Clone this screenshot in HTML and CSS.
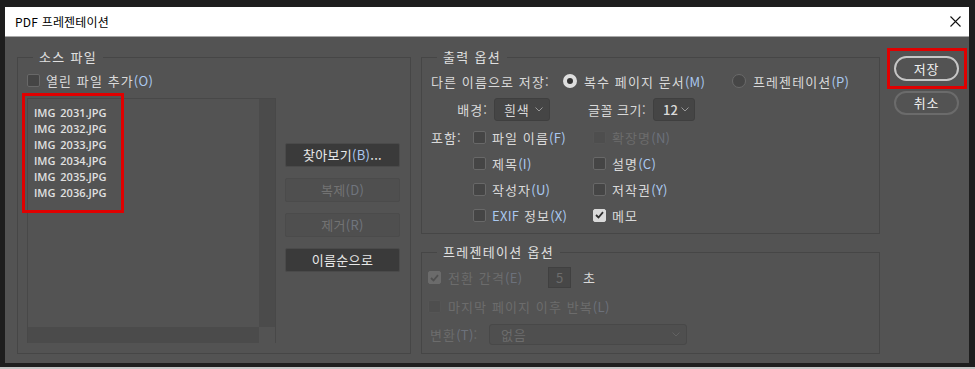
FILE: index.html
```html
<!DOCTYPE html>
<html lang="ko">
<head>
    <meta charset="UTF-8">
    <title>PDF 프레젠테이션</title>
    <link rel="stylesheet" href="styles.css">
</head>
<body>
    <div class="frame">
        <div class="titlebar">
            <span class="title">PDF 프레젠테이션</span>
            <svg class="close" width="11" height="11" viewBox="0 0 11 11"><path d="M0.5 0.5L10.5 10.5M10.5 0.5L0.5 10.5" stroke="#111" stroke-width="1.1" fill="none"/></svg>
        </div>

        <div class="dialog">
            <!-- source files -->
            <div class="group source">
                <span class="group-title">소스 파일</span>
                <div class="row-open">
                    <span class="cb"></span>
                    <span>열린 파일 추가<span class="key">(O)</span></span>
                </div>
                <div class="src-body">
                    <div class="filelist">
                        <div class="files">
                            <div>IMG 2031.JPG</div>
                            <div>IMG 2032.JPG</div>
                            <div>IMG 2033.JPG</div>
                            <div>IMG 2034.JPG</div>
                            <div>IMG 2035.JPG</div>
                            <div>IMG 2036.JPG</div>
                        </div>
                        <div class="vscroll"></div>
                        <div class="hscroll"></div>
                        <div class="corner"></div>
                        <div class="mark mark-files"></div>
                    </div>
                    <div class="src-buttons">
                        <div class="btn">찾아보기<span class="key">(B)</span>...</div>
                        <div class="btn disabled">복제<span class="key">(D)</span></div>
                        <div class="btn disabled">제거<span class="key">(R)</span></div>
                        <div class="btn">이름순으로</div>
                    </div>
                </div>
            </div>

            <div class="col">
                <!-- output options -->
                <div class="group output">
                    <span class="group-title">출력 옵션</span>
                    <div class="row">
                        <span class="lbl-saveas">다른 이름으로 저장:</span>
                        <span class="opt-radio"><span class="radio on"></span>복수 페이지 문서<span class="key">(M)</span></span>
                        <span class="opt-radio"><span class="radio"></span>프레젠테이션<span class="key">(P)</span></span>
                    </div>
                    <div class="row row-sel">
                        <span class="lbl-bg">배경:</span>
                        <span class="select sel-bg">흰색<svg width="8" height="5" viewBox="0 0 8 5"><path d="M0.5 0.5L4 4L7.5 0.5" stroke="#9a9a9a" fill="none"/></svg></span>
                        <span class="lbl-size">글꼴 크기:</span>
                        <span class="select sel-size">12<svg width="8" height="5" viewBox="0 0 8 5"><path d="M0.5 0.5L4 4L7.5 0.5" stroke="#9a9a9a" fill="none"/></svg></span>
                    </div>
                    <div class="row row-chk">
                        <span class="lbl-inc">포함:</span>
                        <span class="opt-chk"><span class="cb"></span>파일 이름<span class="key">(F)</span></span>
                        <span class="opt-chk dim"><span class="cb off"></span>확장명<span class="key">(N)</span></span>
                    </div>
                    <div class="row row-chk">
                        <span class="lbl-inc"></span>
                        <span class="opt-chk"><span class="cb"></span>제목<span class="key">(I)</span></span>
                        <span class="opt-chk"><span class="cb"></span>설명<span class="key">(C)</span></span>
                    </div>
                    <div class="row row-chk">
                        <span class="lbl-inc"></span>
                        <span class="opt-chk"><span class="cb"></span>작성자<span class="key">(U)</span></span>
                        <span class="opt-chk"><span class="cb"></span>저작권<span class="key">(Y)</span></span>
                    </div>
                    <div class="row row-chk">
                        <span class="lbl-inc"></span>
                        <span class="opt-chk"><span class="cb"></span><span class="key">EXIF</span>&nbsp;정보<span class="key">(X)</span></span>
                        <span class="opt-chk"><span class="cb on"><svg width="9" height="8" viewBox="0 0 9 8"><path d="M1 4L3.5 6.5L8 1.2" stroke="#2e2e2e" stroke-width="1.8" fill="none"/></svg></span>메모</span>
                    </div>
                </div>

                <!-- presentation options -->
                <div class="group present">
                    <span class="group-title">프레젠테이션 옵션</span>
                    <div class="prow prow-1">
                        <span class="cb on-off"><svg width="9" height="8" viewBox="0 0 9 8"><path d="M1 4L3.5 6.5L8 1.2" stroke="#505050" stroke-width="1.8" fill="none"/></svg></span>
                        <span class="lbl-interval dim">전환 간격<span class="key">(E)</span></span>
                        <span class="num">5</span>
                        <span class="unit">초</span>
                    </div>
                    <div class="prow prow-2 dim">
                        <span class="cb off"></span>
                        <span>마지막 페이지 이후 반복<span class="key">(L)</span></span>
                    </div>
                    <div class="prow prow-3 dim">
                        <span class="lbl-trans">변환<span class="key">(T)</span>:</span>
                        <span class="select sel-trans">없음<svg width="8" height="5" viewBox="0 0 8 5"><path d="M0.5 0.5L4 4L7.5 0.5" stroke="#626262" fill="none"/></svg></span>
                    </div>
                </div>
            </div>

            <div class="actions">
                <div class="pill save">저장<div class="mark mark-save"></div></div>
                <div class="pill cancel">취소</div>
            </div>
        </div>
    </div>
</body>
</html>
```

FILE: styles.css
```css
body {
    margin: 0;
    background: #1e1e1e;
    font-family: "Noto Sans CJK KR", "Noto Sans", sans-serif;
    font-size: 13px;
    letter-spacing: 1.1px;
    color: #d9d9d9;
}
.frame {
    padding: 7px 6px 4px 5px;
    border-bottom: 2px solid #c4c4c4;
}
.titlebar {
    height: 29px;
    background: #fff;
    border-bottom: 1px solid #a9a9a9;
    display: flex;
    align-items: center;
    justify-content: space-between;
    padding: 0 8px 0 10px;
    color: #000;
    font-size: 12px;
    letter-spacing: 0.2px;
}
.dialog {
    display: flex;
    align-items: flex-start;
    box-sizing: border-box;
    height: 326px;
    background: #535353;
    padding: 19px 0 0 12px;
}
.key {
    color: #aac8ef;
    letter-spacing: 0.3px;
}
.dim {
    color: #6c6c6c;
}
.dim .key {
    color: #6c717b;
}

/* groups */
.group {
    position: relative;
    box-sizing: border-box;
    border: 1px solid #464646;
    margin-top: 1px;
}
.group-title {
    position: absolute;
    top: -9px;
    left: 15px;
    padding: 0 6px;
    background: #535353;
    line-height: 16px;
    color: #e0e0e0;
    letter-spacing: 1.3px;
}

/* source */
.source {
    width: 394px;
    height: 297px;
    padding: 14px 0 0 9px;
}
.row-open {
    display: flex;
    align-items: center;
    height: 16px;
}
.row-open .cb {
    margin-right: 6px;
}
.src-body {
    display: flex;
    margin-top: 10px;
}
.filelist {
    position: relative;
    display: grid;
    grid-template-columns: 231px 16px;
    grid-template-rows: 228px 16px;
    border: 1px solid #484848;
    border-bottom: none;
}
.files {
    padding: 6px 0 0 6px;
    font-family: "Open Sans", sans-serif;
    font-weight: 600;
    font-size: 11px;
    letter-spacing: 0;
    line-height: 16px;
    color: #e0e0e0;
    word-spacing: 2px;
}
.vscroll, .hscroll {
    background: #4b4b4b;
}
.src-buttons {
    display: flex;
    flex-direction: column;
    gap: 11px;
    width: 115px;
    margin: 45px 0 0 9px;
}
.btn {
    box-sizing: border-box;
    height: 24px;
    line-height: 22px;
    text-align: center;
    background: #3a3a3a;
    border: 1px solid #4a4a4a;
    border-radius: 2px;
    color: #e8e8e8;
    letter-spacing: 0.3px;
}
.btn.disabled {
    background: #4f4f4f;
    border-color: #4b4b4b;
    color: #737373;
}
.btn.disabled .key {
    color: #70757e;
}

/* red highlight marks */
.mark {
    position: absolute;
    box-sizing: border-box;
    border: 3px solid #e00000;
}
.mark-files {
    left: -6px;
    top: -6px;
    width: 102px;
    height: 120px;
}
.mark-save {
    left: -9px;
    top: -10px;
    width: 80px;
    height: 41px;
}

/* controls */
.cb {
    box-sizing: border-box;
    flex: none;
    width: 13px;
    height: 13px;
    border: 1px solid #686868;
    border-radius: 2px;
    background: #454545;
    display: flex;
    align-items: center;
    justify-content: center;
}
.cb.on {
    background: #dadada;
    border-color: #dadada;
}
.cb.off {
    background: #4e4e4e;
    border-color: #555;
}
.cb.on-off {
    background: #6b6b6b;
    border-color: #6b6b6b;
}
.radio {
    box-sizing: border-box;
    flex: none;
    width: 14px;
    height: 14px;
    border-radius: 50%;
    border: 1px solid #6a6a6a;
    background: #464646;
    margin-right: 7px;
}
.radio.on {
    border: 4px solid #dedede;
    background: #333;
}
.select {
    box-sizing: border-box;
    height: 23px;
    display: flex;
    align-items: center;
    justify-content: space-between;
    padding: 0 6px 0 9px;
    background: #454545;
    border: 1px solid #3f3f3f;
    border-radius: 3px;
    letter-spacing: 0.8px;
}

/* output */
.col {
    display: flex;
    flex-direction: column;
    gap: 17px;
    width: 459px;
    margin-left: 10px;
}
.output {
    height: 177px;
    padding: 13px 0 0 9px;
}
.row {
    display: flex;
    align-items: center;
    height: 20px;
    white-space: nowrap;
}
.opt-radio, .opt-chk {
    display: flex;
    align-items: center;
}
.lbl-saveas {
    width: 132px;
}
.opt-radio:nth-child(2) {
    width: 169px;
}
.row-sel {
    height: 23px;
    margin-top: 7px;
}
.lbl-bg {
    width: 57px;
    text-align: right;
    margin-right: 6px;
}
.sel-bg {
    width: 56px;
}
.lbl-size {
    width: 60px;
    margin: 0 5px 0 38px;
    letter-spacing: 0.5px;
}
.sel-size {
    width: 42px;
    padding-left: 9px;
    padding-right: 5px;
    letter-spacing: 0;
    font-weight: 500;
}
.row-chk {
    margin-top: 6px;
}
.lbl-inc {
    width: 42px;
}
.opt-chk {
    width: 120px;
}
.opt-chk .cb {
    margin-right: 6px;
}

/* presentation */
.present {
    height: 102px;
    padding: 14px 0 0 6px;
}
.prow {
    display: flex;
    align-items: center;
    height: 20px;
    white-space: nowrap;
}
.prow .cb {
    margin-right: 7px;
}
.prow-1 {
    height: 21px;
}
.lbl-interval {
    width: 100px;
}
.num {
    box-sizing: border-box;
    width: 23px;
    height: 21px;
    padding-left: 7px;
    line-height: 19px;
    background: #474747;
    border: 1px solid #404040;
    color: #6c6c6c;
}
.unit {
    margin-left: 12px;
    color: #d9d9d9;
}
.prow-2, .prow-3 {
    margin-top: 8px;
}
.prow-3 {
    height: 21px;
}
.lbl-trans {
    width: 59px;
    margin-left: 2px;
}
.sel-trans {
    width: 198px;
    height: 21px;
    padding-left: 11px;
    background: #4f4f4f;
    border-color: #484848;
}

/* buttons on the right */
.actions {
    display: flex;
    flex-direction: column;
    gap: 10px;
    width: 65px;
    margin-left: 14px;
}
.pill {
    position: relative;
    box-sizing: border-box;
    height: 25px;
    line-height: 21px;
    text-align: center;
    border: 2px solid #c6c6c6;
    border-radius: 13px;
    color: #f0f0f0;
    letter-spacing: 0.8px;
}
.pill.cancel {
    height: 24px;
    line-height: 20px;
    border-color: #6b6b6b;
}
```
